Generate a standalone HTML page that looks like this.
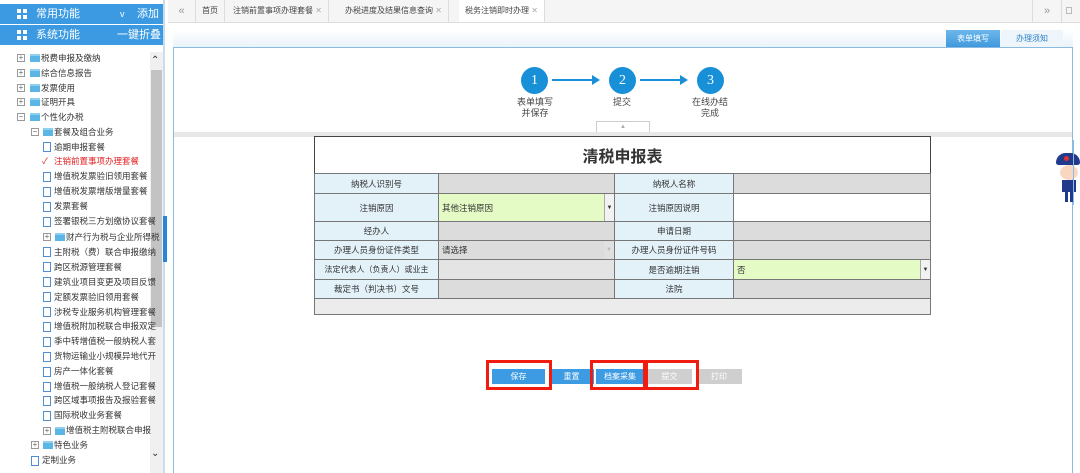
<!DOCTYPE html>
<html><head><meta charset="utf-8"><style>
*{margin:0;padding:0;box-sizing:border-box}
body{width:1080px;height:473px;overflow:hidden;background:#fff;font-family:"Liberation Sans","Noto Sans CJK SC",sans-serif;font-size:9px;color:#333;position:relative}
.abs{position:absolute}
.hd{position:absolute;left:0;width:163px;height:20px;background:#3b9ae1;color:#fff;font-size:11px;line-height:20px}
.hd .ic{position:absolute;left:17px;top:5px;width:10px;height:10px;background:
linear-gradient(#fff,#fff) 0 0/4px 4px no-repeat,linear-gradient(#fff,#fff) 6px 0/4px 4px no-repeat,linear-gradient(#fff,#fff) 0 6px/4px 4px no-repeat,linear-gradient(#fff,#fff) 6px 6px/4px 4px no-repeat}
.it{position:absolute;height:14px;line-height:14px;font-size:8.5px;white-space:nowrap;color:#333}
.pl{position:absolute;width:8px;height:8px;border:1px solid #999;background:#fff;font-size:8px;line-height:6px;text-align:center;color:#666}
.fd{position:absolute;width:10px;height:8px;background:#5bb6e6;border-top:2px solid #8fd0f0}
.lf{position:absolute;width:8px;height:10px;border:1px solid #4f8fd0;background:#fff}
.tab{position:absolute;top:0;height:22px;line-height:22px;font-size:8px;color:#444;border-right:1px solid #ddd;padding:0 6px}
table{border-collapse:collapse;position:absolute}
td{border:1px solid #777;font-size:8.5px;text-align:center;padding:0}
td.l{background:#e3f1f9}
td.g{background:#dcdcdc}
td.y{background:#e5fbc6;text-align:left;padding-left:3px;position:relative}
.btn{position:absolute;top:369px;height:15px;line-height:15px;text-align:center;font-size:8px;color:#fff}
.rb{position:absolute;border:3px solid #f01c10}
.step{position:absolute;top:67px;width:27px;height:27px;border-radius:50%;background:#1890d8;color:#fff;font-size:14px;text-align:center;line-height:27px;font-family:"Liberation Serif",serif}
.arr{position:absolute;top:79px;height:2px;background:#1890d8}
.arr:after{content:"";position:absolute;right:-2px;top:-4px;border-left:8px solid #1890d8;border-top:5px solid transparent;border-bottom:5px solid transparent}
.st{position:absolute;top:97px;font-size:9px;color:#444;text-align:center;line-height:11px;width:60px}
.dd{position:absolute;right:0;top:0;bottom:0;width:10px;background:#f2f2f2;border-left:1px solid #aaa;font-size:6px;line-height:inherit;text-align:center}
</style></head><body>
<!-- sidebar -->
<div class="abs" style="left:0;top:0;width:168px;height:473px;background:#fff"></div>
<div class="hd" style="top:4px"><span class="ic"></span><span style="position:absolute;left:36px">常用功能</span><span style="position:absolute;left:120px;font-size:9px">v</span><span style="position:absolute;left:137px">添加</span></div>
<div class="hd" style="top:25px"><span class="ic"></span><span style="position:absolute;left:36px">系统功能</span><span style="position:absolute;left:117px">一键折叠</span></div>
<div class="abs" style="left:150px;top:52px;width:13px;height:421px;background:#f0f0f0"></div>
<div class="abs" style="left:151px;top:70px;width:11px;height:257px;background:#c3c3c3"></div>
<div class="abs" style="left:151px;top:55px;font-size:10px;color:#333">&#8963;</div>
<div class="abs" style="left:151px;top:448px;font-size:10px;color:#333">&#8964;</div>
<div class="abs" style="left:163px;top:0;width:2px;height:473px;background:#c8dcee"></div>
<div class="abs" style="left:163px;top:216px;width:4px;height:46px;background:#2a86d4"></div>

<div class="pl" style="left:17px;top:54px">+</div><div class="fd" style="left:30px;top:54px"></div><div class="it" style="left:41px;top:51px">税费申报及缴纳</div>
<div class="pl" style="left:17px;top:69px">+</div><div class="fd" style="left:30px;top:69px"></div><div class="it" style="left:41px;top:66px">综合信息报告</div>
<div class="pl" style="left:17px;top:84px">+</div><div class="fd" style="left:30px;top:84px"></div><div class="it" style="left:41px;top:81px">发票使用</div>
<div class="pl" style="left:17px;top:98px">+</div><div class="fd" style="left:30px;top:98px"></div><div class="it" style="left:41px;top:95px">证明开具</div>
<div class="pl" style="left:17px;top:113px">−</div><div class="fd" style="left:30px;top:113px"></div><div class="it" style="left:41px;top:110px">个性化办税</div>
<div class="pl" style="left:31px;top:128px">−</div><div class="fd" style="left:43px;top:128px"></div><div class="it" style="left:54px;top:125px">套餐及组合业务</div>
<div class="lf" style="left:43px;top:142px"></div><div class="it" style="left:54px;top:140px">逾期申报套餐</div>
<div class="it" style="left:42px;top:154px;color:#e02020">✓</div><div class="it" style="left:54px;top:154px;color:#e02020">注销前置事项办理套餐</div>
<div class="lf" style="left:43px;top:172px"></div><div class="it" style="left:54px;top:169px">增值税发票验旧领用套餐</div>
<div class="lf" style="left:43px;top:187px"></div><div class="it" style="left:54px;top:184px">增值税发票增版增量套餐</div>
<div class="lf" style="left:43px;top:202px"></div><div class="it" style="left:54px;top:199px">发票套餐</div>
<div class="lf" style="left:43px;top:217px"></div><div class="it" style="left:54px;top:214px">签署银税三方划缴协议套餐</div>
<div class="pl" style="left:43px;top:233px">+</div><div class="fd" style="left:55px;top:233px"></div><div class="it" style="left:66px;top:230px">财产行为税与企业所得税</div>
<div class="lf" style="left:43px;top:247px"></div><div class="it" style="left:54px;top:245px">主附税（费）联合申报缴纳</div>
<div class="lf" style="left:43px;top:262px"></div><div class="it" style="left:54px;top:260px">跨区税源管理套餐</div>
<div class="lf" style="left:43px;top:277px"></div><div class="it" style="left:54px;top:275px">建筑业项目变更及项目反馈</div>
<div class="lf" style="left:43px;top:292px"></div><div class="it" style="left:54px;top:290px">定额发票验旧领用套餐</div>
<div class="lf" style="left:43px;top:307px"></div><div class="it" style="left:54px;top:305px">涉税专业服务机构管理套餐</div>
<div class="lf" style="left:43px;top:322px"></div><div class="it" style="left:54px;top:319px">增值税附加税联合申报双定</div>
<div class="lf" style="left:43px;top:337px"></div><div class="it" style="left:54px;top:334px">季中转增值税一般纳税人套</div>
<div class="lf" style="left:43px;top:352px"></div><div class="it" style="left:54px;top:349px">货物运输业小规模异地代开</div>
<div class="lf" style="left:43px;top:367px"></div><div class="it" style="left:54px;top:364px">房产一体化套餐</div>
<div class="lf" style="left:43px;top:382px"></div><div class="it" style="left:54px;top:379px">增值税一般纳税人登记套餐</div>
<div class="lf" style="left:43px;top:396px"></div><div class="it" style="left:54px;top:393px">跨区域事项报告及报验套餐</div>
<div class="lf" style="left:43px;top:411px"></div><div class="it" style="left:54px;top:408px">国际税收业务套餐</div>
<div class="pl" style="left:43px;top:427px">+</div><div class="fd" style="left:55px;top:427px"></div><div class="it" style="left:66px;top:423px">增值税主附税联合申报</div>
<div class="pl" style="left:31px;top:441px">+</div><div class="fd" style="left:43px;top:441px"></div><div class="it" style="left:54px;top:438px">特色业务</div>
<div class="lf" style="left:31px;top:456px"></div><div class="it" style="left:42px;top:453px">定制业务</div>

<!-- tab bar -->
<div class="abs" style="left:168px;top:0;width:912px;height:23px;background:#f5f5f5;border-bottom:1px solid #ddd"></div>
<div class="tab" style="left:168px;width:28px;color:#999;font-size:11px;text-align:center;padding:0">«</div>
<div class="tab" style="left:196px">首页</div>
<div class="tab" style="left:227px">注销前置事项办理套餐 <span style="color:#aaa">✕</span></div>
<div class="tab" style="left:339px">办税进度及结果信息查询 <span style="color:#aaa">✕</span></div>
<div class="tab" style="left:459px;background:#fff">税务注销即时办理 <span style="color:#aaa">✕</span></div>
<div class="tab" style="left:1032px;border-left:1px solid #ddd;width:30px;color:#999;font-size:11px;text-align:center;padding:0">»</div>
<div class="abs" style="left:1066px;top:7px;width:6px;height:7px;border:1px solid #bbb"></div>

<!-- content -->
<div class="abs" style="left:173px;top:30px;width:900px;height:18px;background:linear-gradient(#fff,#e8f2fa)"></div>
<div class="abs" style="left:946px;top:30px;width:54px;height:18px;background:linear-gradient(#6cb7ec,#3e98dc);color:#fff;font-size:8px;line-height:18px;text-align:center">表单填写</div>
<div class="abs" style="left:1001px;top:30px;width:62px;height:18px;background:#eef6fc;color:#2a7fc8;font-size:8px;line-height:18px;text-align:center">办理须知</div>
<div class="abs" style="left:173px;top:47px;width:900px;height:426px;border:1px solid #8bbbe0;border-bottom:none;background:#fff"></div>

<div class="step" style="left:521px">1</div>
<div class="step" style="left:609px">2</div>
<div class="step" style="left:697px">3</div>
<div class="arr" style="left:552px;width:46px"></div>
<div class="arr" style="left:640px;width:46px"></div>
<div class="st" style="left:505px">表单填写<br>并保存</div>
<div class="st" style="left:592px">提交</div>
<div class="st" style="left:680px">在线办结<br>完成</div>
<div class="abs" style="left:596px;top:121px;width:54px;height:12px;border:1px solid #ccc;border-bottom:none;background:#fff;font-size:6px;color:#aaa;text-align:center;line-height:11px">▲</div>
<div class="abs" style="left:174px;top:132px;width:898px;height:5px;background:#e8e8e8"></div>

<table style="left:314px;top:136px;width:617px">
<tr style="height:37px"><td colspan="4" style="font-size:16px;font-weight:bold;background:#fff;border:1px solid #444;border-bottom:1px solid #777">清税申报表</td></tr>
<tr style="height:20px"><td class="l" style="width:124px">纳税人识别号</td><td class="g" style="width:176px"></td><td class="l" style="width:119px">纳税人名称</td><td class="g"></td></tr>
<tr style="height:28px"><td class="l">注销原因</td><td class="y">其他注销原因<span class="dd" style="line-height:28px">▼</span></td><td class="l">注销原因说明</td><td style="background:#fff"></td></tr>
<tr style="height:19px"><td class="l">经办人</td><td class="g"></td><td class="l">申请日期</td><td class="g"></td></tr>
<tr style="height:19px"><td class="l">办理人员身份证件类型</td><td class="g" style="text-align:left;padding-left:3px;position:relative">请选择<span class="dd" style="line-height:19px;color:#bbb;background:#e0e0e0;border:none">▼</span></td><td class="l">办理人员身份证件号码</td><td class="g"></td></tr>
<tr style="height:20px"><td class="l" style="white-space:nowrap;font-size:8px">法定代表人（负责人）或业主</td><td class="g" style="background:#e4e4e4"></td><td class="l">是否逾期注销</td><td class="y">否<span class="dd" style="line-height:20px">▼</span></td></tr>
<tr style="height:19px"><td class="l">裁定书（判决书）文号</td><td class="g"></td><td class="l">法院</td><td class="g"></td></tr>
<tr style="height:16px"><td colspan="4" style="background:#ececec"></td></tr>
</table>

<div class="btn" style="left:492px;width:53px;background:#3d9be3">保存</div>
<div class="btn" style="left:549px;width:45px;background:#3d9be3">重置</div>
<div class="btn" style="left:596px;width:48px;background:#3d9be3">档案采集</div>
<div class="btn" style="left:647px;width:45px;background:#cfcfcf">提交</div>
<div class="btn" style="left:696px;width:46px;background:#cfcfcf">打印</div>
<div class="rb" style="left:486px;top:360px;width:66px;height:30px"></div>
<div class="rb" style="left:590px;top:360px;width:58px;height:30px"></div>
<div class="rb" style="left:643px;top:360px;width:56px;height:30px"></div>

<!-- mascot -->
<div class="abs" style="left:1056px;top:153px;width:24px;height:12px;background:#213a8c;border-radius:12px 12px 3px 3px"></div>
<div class="abs" style="left:1064px;top:156px;width:5px;height:5px;background:#e03030;border-radius:50%"></div>
<div class="abs" style="left:1060px;top:165px;width:18px;height:15px;background:#f8d7c2;border-radius:50%"></div>
<div class="abs" style="left:1062px;top:180px;width:14px;height:12px;background:#213a8c"></div>
<div class="abs" style="left:1065px;top:192px;width:3px;height:10px;background:#213a8c"></div>
<div class="abs" style="left:1070px;top:192px;width:3px;height:10px;background:#213a8c"></div>
<div class="abs" style="left:1073px;top:140px;width:1px;height:65px;background:#8bbbe0"></div>
</body></html>
